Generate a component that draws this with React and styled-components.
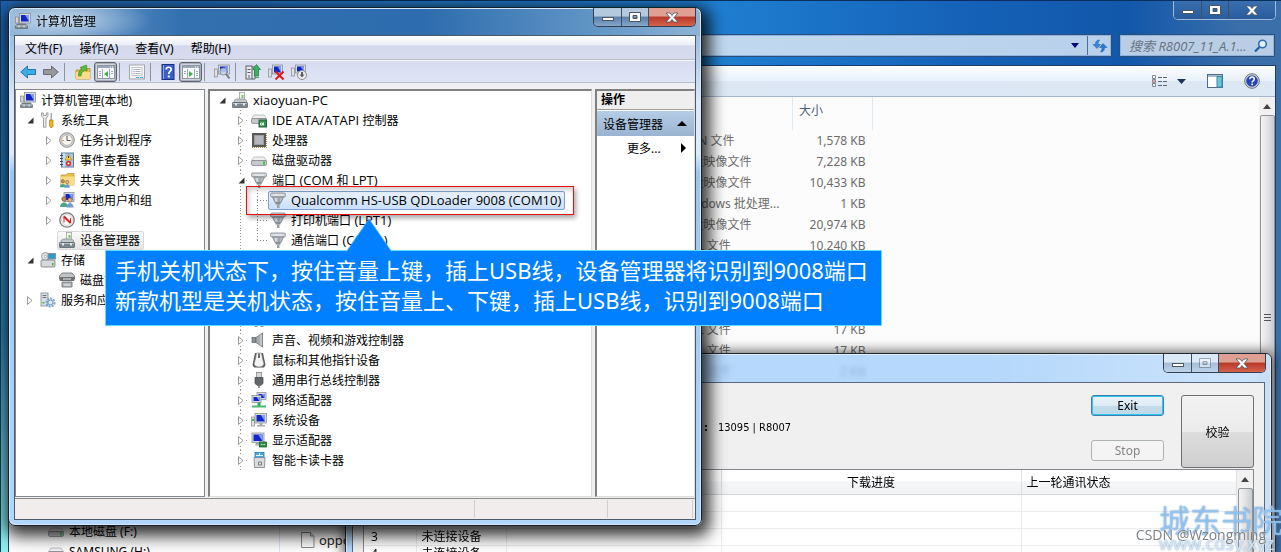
import React from "react";
import styled, { createGlobalStyle, css } from "styled-components";

const Global = createGlobalStyle`
  * { box-sizing: border-box; }
  html, body { margin: 0; height: 100%; }
  body {
    font-family: "Noto Sans", "Noto Sans CJK SC", sans-serif;
    font-size: 12px;
    color: #000;
    overflow: hidden;
  }
  button, input { font: inherit; color: inherit; margin: 0; padding: 0; border: 0; background: none; }
  button { cursor: default; }
  svg { display: block; flex: none; }
  ul, h1, h2 { margin: 0; padding: 0; list-style: none; font-size: 12px; font-weight: 400; }
`;

/* ---------- icons ---------- */

const Screen = ({ x = 5, y = 1, w = 10, h = 9 }) => (
  <>
    <rect x={x} y={y} width={w} height={h} fill="#d8dce0" stroke="#8b9299" strokeWidth=".8" />
    <rect x={x + 1.5} y={y + 1.5} width={w - 3} height={h - 3} fill="#1226c8" />
    <path d={`M${x + w / 2} ${y + 1.5}h${w / 2 - 1.5}v${h - 3}z`} fill="#7f9cf0" />
  </>
);

const Drive = ({ y = 6 }) => (
  <>
    <path d={`M3 ${y}h10l2.500 3.500H.5z`} fill="#f0f0f1" stroke="#aaa" strokeWidth=".7" />
    <rect x=".5" y={y + 3.5} width="15" height="5" rx="1.5" fill="#c6c8ce" stroke="#85878f" strokeWidth=".8" />
  </>
);

const Port = () => (
  <>
    <rect x=".5" y="1" width="15" height="4" rx="1.500" fill="#cfd4d8" stroke="#7f868c" strokeWidth=".8" />
    <path d="M2.500 5h11L11 10.500H5z" fill="#b4bbc0" stroke="#777e84" strokeWidth=".8" />
    <path d="M3 3h10M6 6v3.500" stroke="#f5f5f5" />
    <path d="M9 6v4" stroke="#8b9297" />
    <path d="M5.500 10.500h5v2h-5z" fill="#858c92" />
    <path d="M7 12.500h2.500v3.500H7z" fill="#9aa1a7" />
  </>
);

const Toolcase = () => (
  <>
    <rect x="7.500" y="0.500" width="5" height="8" fill="#f3f3ee" stroke="#999" strokeWidth=".7" />
    <rect x="9.500" y="3" width="2" height="3" fill="#7cc46a" />
    <path d="M2 8.500L4.500 7h8L14.500 8.500v2h-12z" fill="#c2c7cb" stroke="#7d848a" strokeWidth=".7" />
    <rect x=".5" y="10.500" width="15" height="5" rx=".6" fill="#7b858e" stroke="#545c63" strokeWidth=".7" />
    <path d="M1 11.500h14" stroke="#b6bdc3" />
    <rect x="3" y="11" width="2" height="2.500" fill="#e4e7ea" />
    <rect x="11" y="11" width="2" height="2.500" fill="#e4e7ea" />
  </>
);

const Console = () => (
  <>
    <rect x=".5" y="4" width="3" height="6" fill="#d0d3d6" stroke="#888" strokeWidth=".7" />
    <Screen x={4.5} y={0.5} w={11} h={9.5} />
    <path d="M2.500 11h8l2 2v2.500H.5V13z" fill="#7b858e" stroke="#545c63" strokeWidth=".6" />
    <path d="M1 13h11" stroke="#c4cad0" />
    <path d="M4 12.500v2M9 12.500v2" stroke="#eceeef" />
  </>
);

const Pane = ({ flip }) => (
  <>
    <rect x=".5" y="1.500" width="17" height="13" fill="#f7f8fa" stroke="#8c97a6" />
    <path d="M1 3h16" stroke="#9ba7b8" strokeWidth="2" />
    <path d="M13 3h1M15 3h1" stroke="#fff" />
    {flip ? (
      <>
        <path d="M12.500 5v9M5.500 5v9" stroke="#9ba7b8" />
        <path d="M14 7.500h2M14 9.500h2M14 11.500h2M2 7.500h2M2 9.500h2" stroke="#9ba7b8" />
        <path d="M7 7v6l4-3z" fill="#3cb53c" />
      </>
    ) : (
      <>
        <path d="M5.500 5v9M12.500 5v9" stroke="#9ba7b8" />
        <path d="M2 7.500h2M2 9.500h2M2 11.500h2M14 7.500h2M14 9.500h2" stroke="#9ba7b8" />
        <path d="M11 7v6l-4-3z" fill="#3cb53c" />
      </>
    )}
  </>
);

const People = () => (
  <>
    <circle cx="5" cy="7" r="2.300" fill="#c58a5a" stroke="#6e4a2e" strokeWidth=".6" />
    <path d="M1 15c0-6 8-6 8 0z" fill="#4aa687" />
    <circle cx="11" cy="8" r="2.200" fill="#e0b58a" stroke="#6e4a2e" strokeWidth=".6" />
    <path d="M7.500 15.500c0-6 7-6 7 0z" fill="#6f9ccf" />
  </>
);

const ART = {
  console: <Console />,
  toolcase: <Toolcase />,
  tools: (
    <>
      <path d="M1.500 .8v3.500L3.500 6v9.200h2.500V6l2-1.700V.8L6.300 1v2.500h-3V1z" fill="#ededed" stroke="#8a8a8a" strokeWidth=".8" />
      <path d="M10.500 1h1.500v7h-1.500z" fill="#aaa" />
      <path d="M9.500 8H13v6l-1 1.500h-1.500l-1-1.500z" fill="#f2b21c" stroke="#b57d08" strokeWidth=".7" />
    </>
  ),
  clock: (
    <>
      <circle cx="8" cy="8" r="7.300" fill="#d2d4d6" stroke="#8a8c8f" />
      <circle cx="8" cy="8" r="5.300" fill="#fbf8ea" stroke="#a3a5a6" strokeWidth=".7" />
      <path d="M8 3.500V8.500h3.500" fill="none" stroke="#44526a" />
      <path d="M3.500 8.500h1.500" stroke="#d59b33" />
    </>
  ),
  event: (
    <>
      <rect x="2.500" y="1" width="12" height="14" fill="#a9c9ec" stroke="#5d7ba0" />
      <path d="M5 1v14" stroke="#e8f1fa" />
      <path d="M1 3.500h3M1 6.500h3M1 9.500h3M1 12.500h3" stroke="#3d4a58" />
      <path d="M9.500 2l3.500 6H6z" fill="#f7d02e" stroke="#a98408" strokeWidth=".6" />
      <path d="M9.500 4v2" stroke="#333" />
      <circle cx="9.500" cy="11.500" r="2.700" fill="#d8322a" />
      <circle cx="9.500" cy="11.500" r="1" fill="#fff" />
    </>
  ),
  share: (
    <>
      <path d="M2 3h5l1.500-1.500h6.500V13H2z" fill="#e9bf4f" stroke="#b98d26" strokeWidth=".7" />
      <path d="M2 4.500h13V13H2z" fill="#f7dd85" />
      <g transform="translate(0 4) scale(.75)"><People /></g>
    </>
  ),
  users: (
    <>
      <Screen x={5} y={0.5} w={10} h={9} />
      <People />
    </>
  ),
  perf: (
    <>
      <circle cx="8" cy="8" r="7.200" fill="#f5f5f5" stroke="#77797c" strokeWidth="1.300" />
      <circle cx="8" cy="8" r="5.300" fill="#fff" stroke="#bbb" strokeWidth=".6" />
      <path d="M5 4.500v6M11.500 6v5" stroke="#d42020" />
      <path d="M5 4.500l6.500 6.500" stroke="#d42020" strokeWidth="2" />
    </>
  ),
  storage: (
    <>
      <circle cx="5.500" cy="4.500" r="4" fill="#e2e4e6" stroke="#85898e" strokeWidth=".8" />
      <circle cx="5.500" cy="4.500" r="1.200" fill="#fff" stroke="#85898e" strokeWidth=".6" />
      <rect x="8" y="1.500" width="7.500" height="5.500" fill="#2f9ad0" stroke="#87949e" />
      <rect x="1" y="8" width="14" height="7" rx="1" fill="#d6d8da" stroke="#75797e" strokeWidth=".8" />
      <rect x="12" y="11" width="1.500" height="2.500" fill="#33b933" />
    </>
  ),
  disk: (
    <>
      <path d="M3 1h10l2.500 3v3H.5V4z" fill="#c2c4c6" stroke="#66696c" strokeWidth=".8" />
      <rect x=".5" y="5" width="15" height="4" rx="1" fill="#6f7275" />
      <path d="M3 10h10v5H3z" fill="#b5b7b9" stroke="#66696c" strokeWidth=".8" />
      <path d="M4 7h8M5 13h6" stroke="#ececec" />
    </>
  ),
  services: (
    <>
      <rect x="1" y="1" width="7" height="13" fill="#d9e0e5" stroke="#7e8a93" strokeWidth=".8" />
      <path d="M2.500 3.500h4M2.500 5.500h4" stroke="#6a7780" />
      <rect x="2.500" y="10" width="2" height="1.500" fill="#46ad46" />
      <circle cx="10.500" cy="10.500" r="4" fill="none" stroke="#7ba3c7" strokeWidth="2" strokeDasharray="2 1" />
      <circle cx="10.500" cy="10.500" r="2.500" fill="#dbe8f4" stroke="#6f95b8" />
    </>
  ),
  ide: (
    <>
      <Drive y={3} />
      <rect x="8" y="8" width="7.500" height="7" fill="#3b8f50" stroke="#1f6634" />
      <path d="M9.500 11h2v2h-2zM12.500 10.500v3" stroke="#d9f2dd" fill="none" />
    </>
  ),
  cpu: (
    <>
      <rect x="1" y="1" width="14" height="14" fill="#5a5a58" />
      <path d="M1 15.500h15M15.500 1v15" stroke="#b08e3c" strokeDasharray="1 1" />
      <rect x="3.500" y="3.500" width="9" height="9" fill="#b5b8ba" stroke="#9b9ea0" />
    </>
  ),
  drive: (
    <>
      <Drive y={5} />
      <rect x="12" y="9.500" width="2" height="3" fill="#3bc63b" />
    </>
  ),
  port: <Port />,
  blob: (
    <>
      <circle cx="5" cy="13" r="2" fill="#777" />
      <circle cx="11" cy="13" r="2" fill="#777" />
    </>
  ),
  sound: (
    <>
      <rect x="1" y="5.500" width="4" height="5" fill="#8b9095" stroke="#5f6468" strokeWidth=".7" />
      <path d="M5 5.500L11.500 1v14L5 10.500z" fill="#a9aeb2" stroke="#6b7074" strokeWidth=".8" />
      <path d="M10 2.500v11" stroke="#dfe2e4" />
    </>
  ),
  mouse: (
    <>
      <path d="M4 1h8l2.500 12-1.500 2.500H3L1.500 13z" fill="#5a5a5a" />
      <path d="M5.500 1h5l1 5.500 1.500 5.500c-1 4-9 4-10 0l1.500-5.500z" fill="#f3f3f3" stroke="#777" strokeWidth=".6" />
      <path d="M8 1.500v4.500" stroke="#444" strokeWidth="1.500" />
    </>
  ),
  usb: (
    <>
      <rect x="5.500" y="0.500" width="5" height="5" fill="#d6d8da" stroke="#85898e" strokeWidth=".8" />
      <path d="M4 5.500h8v6l-2.500 2h-3L4 11.500z" fill="#64686c" stroke="#45484b" strokeWidth=".7" />
      <path d="M8 13v3" stroke="#777" strokeWidth="1.500" />
    </>
  ),
  net: (
    <>
      <Screen x={6} y={0.5} w={9} h={7} />
      <Screen x={1} y={3.5} w={9} h={7} />
      <path d="M8 10.500v4" stroke="#2fa35a" strokeWidth="3" />
      <path d="M1 14.500h14" stroke="#48b872" strokeWidth="2" />
    </>
  ),
  system: (
    <>
      <rect x=".5" y="5" width="3" height="9" fill="#dfe2e4" stroke="#85898e" strokeWidth=".7" />
      <rect x="1" y="7" width="2" height="2" fill="#39b539" />
      <Screen x={4} y={1.5} w={11.5} h={9.5} />
      <path d="M8.500 11h3v2h2.500v1.500H6V13h2.500z" fill="#a7acb0" />
    </>
  ),
  display: (
    <>
      <Screen x={1} y={1} w={12} h={9.5} />
      <path d="M5 11h4v2.500H4z" fill="#a7acb0" />
      <rect x="8.500" y="10" width="7" height="5" fill="#2f8a46" stroke="#1f6634" strokeWidth=".8" />
      <path d="M10 12.500h1.500M12.500 12.500h1.500" stroke="#d9f2dd" />
    </>
  ),
  card: (
    <>
      <rect x="4" y=".5" width="9" height="6" fill="#44a8e8" stroke="#2b79b5" strokeWidth=".8" />
      <path d="M5 3.500h7M8.500 1v3" stroke="#e9f6ff" />
      <path d="M3 5.500h11l-.5 10h-10z" fill="#d9dbdd" stroke="#7b8085" strokeWidth=".8" />
      <path d="M7.500 10h3v3h-3z" fill="none" stroke="#7b8085" />
    </>
  ),
  back: <path d="M.8 8l6.700-6v3.500h8v5h-8V14z" fill="#3fabe6" stroke="#2474b0" />,
  forward: <path d="M15.200 8L8.500 2v3.500H.5v5h8V14z" fill="#98999b" stroke="#6c6e70" />,
  up: (
    <>
      <path d="M1 6h5l1-1.500h8V15H1z" fill="#e8bd57" stroke="#b38a2b" strokeWidth=".8" />
      <path d="M1 8h14v7H1z" fill="#f8dc8c" />
      <path d="M3.500 12c0-5 1-5.500 3.500-7L5 3.500 11.500 1l.5 6-2-1C8 7.500 6.500 8 6 12z" fill="#5dbb36" stroke="#377f1b" strokeWidth=".6" />
    </>
  ),
  props: (
    <>
      <rect x=".5" y="1" width="15" height="14" fill="#f6f6f4" stroke="#a2a6aa" />
      <rect x="3" y="3.500" width="10" height="8" fill="#fff" stroke="#b6babf" strokeWidth=".8" />
      <path d="M4.500 5.500h1M4.500 7.500h1M4.500 9.500h1" stroke="#4d88c8" />
      <path d="M6.500 5.500h5M6.500 7.500h5M6.500 9.500h5" stroke="#aeb3b8" />
      <path d="M7 13.500h3M11 13.500h3" stroke="#38b8d8" />
    </>
  ),
  help: (
    <>
      <rect x="2" y=".5" width="12" height="15" fill="#3a5ec8" stroke="#1a3184" />
      <path d="M3.500 1v14" stroke="#8faaf0" />
      <path d="M6.200 5.500c0-3 5-3 5 0 0 2-2.500 2-2.500 4.500" fill="none" stroke="#fff" strokeWidth="1.700" />
      <rect x="7.800" y="11.500" width="2" height="2" fill="#fff" />
    </>
  ),
  scan: (
    <>
      <rect x=".5" y="5" width="3" height="8" fill="#dfe2e4" stroke="#85898e" strokeWidth=".7" />
      <Screen x={4.5} y={1} w={11} h={9} />
      <circle cx="9.500" cy="7.500" r="3.500" fill="#cfe6f8" fillOpacity=".8" stroke="#8d9094" />
      <path d="M12 10l3.500 4.500" stroke="#76797c" strokeWidth="2" />
    </>
  ),
  update: (
    <>
      <rect x="1" y="2" width="6" height="13" fill="#e7e9ea" stroke="#5c6064" />
      <path d="M2.500 5.500h3M2.500 8.500h3M4 11v3M7 3h3v12H7" stroke="#5c6064" fill="none" />
      <path d="M11.500 .5l4 5h-2V12h-4V5.500h-2z" fill="#3dae62" stroke="#1e7a3d" strokeWidth=".7" />
      <path d="M10 13.500h4" stroke="#3dae62" />
    </>
  ),
  remove: (
    <>
      <rect x=".5" y="5" width="3" height="8" fill="#dfe2e4" stroke="#85898e" strokeWidth=".7" />
      <Screen x={4.5} y={1} w={10} h={9} />
      <path d="M7.500 7.500l8 8M15.500 7.500l-8 8" stroke="#e01b1b" strokeWidth="2" />
    </>
  ),
  disable: (
    <>
      <rect x=".5" y="4" width="3" height="8" fill="#dfe2e4" stroke="#85898e" strokeWidth=".7" />
      <Screen x={4.5} y={1} w={10} h={8} />
      <circle cx="11" cy="11" r="4.500" fill="#ededee" stroke="#8a8c8f" />
      <path d="M11 8v3" stroke="#5e6164" strokeWidth="2" />
      <path d="M8.500 10.500h5L11 13.500z" fill="#5e6164" />
    </>
  ),
  file: (
    <>
      <path d="M1.500 .5h9L14 4v11.500H1.500z" fill="#fbfbfb" stroke="#8b8b8b" />
      <path d="M10.500 .5V4H14" fill="#e4e4e4" stroke="#8b8b8b" />
    </>
  ),
};

const Icon = ({ name, wide }) => (
  <svg width={wide ? 18 : 16} height="16" viewBox={wide ? "0 0 18 16" : "0 0 16 16"} aria-hidden="true">
    {name === "paneLeft" ? <Pane /> : name === "paneRight" ? <Pane flip /> : ART[name]}
  </svg>
);

/* ---------- window chrome ---------- */

const Desktop = styled.main`
  position: relative;
  height: 100vh;
  min-height: 552px;
  overflow: hidden;
  background: #0c4a96;
`;

const CaptionGroup = styled.div`
  display: flex;
  height: 19px;
  border: 1px solid ${(p) => (p.$tone === "back" ? "#9db9dc" : "#33404f")};
  border-top: 0;
  border-radius: 0 0 5px 5px;
  overflow: hidden;
`;

const toneFill = {
  back: "linear-gradient(#3a6fae, #285c9d)",
  front: "linear-gradient(#b4c8de 0 45%, #5b7fa6 50%, #84a8cb)",
  pale: "linear-gradient(#dce9f7 0 45%, #a7bdd6 50%, #bdd3ea)",
};

const CaptionButton = styled.button`
  width: ${(p) => (p.$wide ? 47 : 27)}px;
  display: grid;
  place-items: center;
  background: ${(p) =>
    p.$wide && p.$tone !== "back" ? "linear-gradient(#dda093 0 45%, #b8372a 50%, #d4644a)" : toneFill[p.$tone]};
  & + & { border-left: 1px solid ${(p) => (p.$tone === "back" ? "#8fabd0" : "#3f4e60")}; }
`;

function Captions({ tone, mute }) {
  return (
    <CaptionGroup $tone={tone}>
      <CaptionButton $tone={tone} aria-label="最小化">
        <svg width="14" height="10"><rect x="1.500" y="5.500" width="11" height="3" fill="#fff" stroke="#4b5663" /></svg>
      </CaptionButton>
      <CaptionButton $tone={tone} aria-label="最大化">
        <svg width="14" height="10" opacity={mute ? 0.45 : 1}>
          <path d="M1.500 .5h11v9h-11zM5 3.500h4v3H5z" fill="#fff" fillRule="evenodd" stroke="#4b5663" />
        </svg>
      </CaptionButton>
      <CaptionButton $tone={tone} $wide aria-label="关闭">
        <svg width="14" height="11">
          <path d="M1 1h4l2 2.500L9 1h4L9 5.500l4 4.500H9L7 7.500 5 10H1l4-4.500z" fill="#fff" stroke="#4b5663" strokeWidth=".8" />
        </svg>
      </CaptionButton>
    </CaptionGroup>
  );
}

/* ---------- explorer window ---------- */

const ExplorerWindow = styled.section`
  height: 100%;
  display: flex;
  flex-direction: column;
  padding: 0 5px 0 7px;
  border-top: 1px solid #0b2f5c;
  border-left: 1px solid #1c3a5c;
  background:
    linear-gradient(#1c63b0, #2a86b4 60%, #8ff0ee) 0 0 / 7px 100% no-repeat,
    linear-gradient(90deg, #2467ad, #1f80d2 55%, #1562b8 75%, #1257aa 88%, #3b6fa9 97%);
`;

const ExplorerTitle = styled.header`
  display: flex;
  justify-content: flex-end;
  height: 33px;
`;

const AddressRow = styled.div`
  display: flex;
  gap: 7px;
  height: 23px;
  padding-right: 1px;
`;

const Glassy = styled.div`
  display: flex;
  align-items: center;
  border: 1px solid #2c4f7c;
  outline: 1px solid #8fb3dc;
  outline-offset: -2px;
  background: ${(p) => (p.$search ? "#b9cde5" : "linear-gradient(90deg, #c3dcf2 50%, #b9d0ea)")};
`;

const Address = styled(Glassy)`
  flex: 1;
  justify-content: flex-end;
`;

const AddressButton = styled.button`
  display: grid;
  place-items: center;
  width: 24px;
  height: 21px;
  & + & { border-left: 1px solid #4e6f98; }
`;

const Search = styled(Glassy).attrs({ as: "label" })`
  width: 156px;
  padding: 0 6px 0 9px;
`;

const SearchInput = styled.input`
  flex: 1;
  min-width: 0;
  font-family: "Open Sans", "Noto Sans CJK SC", sans-serif;
  font-size: 13px;
  font-style: italic;
  outline: 0;
  &::placeholder { color: #66727f; opacity: 1; }
`;

const ExplorerBody = styled.div`
  flex: 1;
  display: flex;
  flex-direction: column;
  min-height: 0;
  margin-top: 8px;
  border: 1px solid #1d3d66;
  border-bottom: 0;
  background: #fcfcfc;
`;

const CommandBar = styled.div`
  display: flex;
  justify-content: flex-end;
  align-items: center;
  gap: 21px;
  height: 31px;
  flex: none;
  padding-right: 15px;
  border-bottom: 1px solid #a5b7d0;
  background: linear-gradient(#fdfeff, #e8f0fa 50%, #dce6f4 52%, #dde8f5);
`;

const ViewGroup = styled.button`
  display: flex;
  align-items: center;
  gap: 10px;
`;

const PlainButton = styled.button`
  display: grid;
  place-items: center;
`;

const ExplorerSplit = styled.div`
  flex: 1;
  display: flex;
  min-height: 0;
  overflow: hidden;
`;

const NavPane = styled.ul`
  width: 271px;
  padding-top: 424px;
  border-right: 1px solid #d6e5f5;
`;

const NavItem = styled.li`
  display: flex;
  align-items: center;
  gap: 5px;
  height: 20px;
  padding-left: 39px;
`;

const FileArea = styled.div`
  flex: 1;
  min-width: 0;
`;

const FileTable = styled.table`
  width: 593px;
  table-layout: fixed;
  border-collapse: collapse;
  color: #6d6d6d;
  th {
    height: 33px;
    padding: 0 0 8px 6px;
    text-align: left;
    font-weight: 400;
    color: #4c607a;
    border-right: 1px solid #dfeaf7;
  }
  td {
    height: 21px;
    padding: 0;
    line-height: 16px;
    white-space: nowrap;
    overflow: hidden;
  }
  td:last-child { text-align: right; padding-right: 7px; }
`;

const FileName = styled.span`
  display: flex;
  align-items: center;
  gap: 3px;
  padding-left: 20px;
  font-size: 13px;
  color: #222;
`;

const Scrollbar = styled.div`
  width: 16px;
  flex: none;
  display: flex;
  flex-direction: column;
  align-items: center;
  background: #f1f1f1;
`;

const ScrollArrow = styled.button`
  display: grid;
  place-items: center;
  width: 16px;
  height: 18px;
  flex: none;
`;

const Thumb = styled.div`
  display: grid;
  place-items: center;
  width: 15px;
  height: ${(p) => p.$height}px;
  flex: none;
  border: 1px solid #8f9499;
  border-radius: 2px;
  background: linear-gradient(90deg, #f4f4f4, #e3e3e5 50%, #c9cacd);
`;

const ArrowUp = () => (
  <svg width="8" height="5"><path d="M0 5l4-5 4 5z" fill="#444" /></svg>
);

const files = [
  ["MBN 文件", "1,578 KB"],
  ["光盘映像文件", "7,228 KB"],
  ["光盘映像文件", "10,433 KB"],
  ["Windows 批处理...", "1 KB"],
  ["光盘映像文件", "20,974 KB"],
  ["XML 文件", "10,240 KB"],
  [], [], [],
  ["XML 文件", "17 KB"],
  ["XML 文件", "17 KB"],
  ["XML 文件", "2 KB"],
  [], [], [], [], [], [], [],
  [null, null, "oppo"],
];

function Explorer() {
  return (
    <ExplorerWindow>
      <ExplorerTitle><Captions tone="back" /></ExplorerTitle>
      <AddressRow>
        <Address>
          <AddressButton aria-label="展开地址">
            <svg width="8" height="5"><path d="M0 0h8L4 5z" fill="#000080" /></svg>
          </AddressButton>
          <AddressButton aria-label="刷新">
            <svg width="16" height="14" viewBox="0 0 16 14">
              <path d="M7.500 1C5 1 3.500 2 3.500 5.500H1l4 4 3.500-4H6c0-2 .5-3 1.500-4.500z" fill="#3787d8" stroke="#1e5da3" strokeWidth=".5" />
              <path d="M8.500 13c2.500 0 4-1 4-4.500H15l-4-4-3.500 4H10c0 2-.5 3-1.500 4.500z" fill="#2c78cc" stroke="#1e5da3" strokeWidth=".5" />
            </svg>
          </AddressButton>
        </Address>
        <Search $search>
          <SearchInput type="text" placeholder="搜索 R8007_11_A.1..." aria-label="搜索" />
          <svg width="14" height="14" viewBox="0 0 14 14">
            <circle cx="8.500" cy="5" r="3.800" fill="#e3effa" stroke="#2a6fbd" strokeWidth="1.600" />
            <path d="M5.500 8L1 12.500" stroke="#1d5ba5" strokeWidth="2.200" />
          </svg>
        </Search>
      </AddressRow>
      <ExplorerBody>
        <CommandBar>
          <ViewGroup aria-label="更改视图">
            <svg width="15" height="13" viewBox="0 0 15 13">
              <path d="M.5 .5h3v3h-3zM.5 4.500h3v3h-3zM.5 8.500h3v3h-3z" fill="#fff" stroke="#808894" />
              <path d="M6 2.500h4M11 2.500h4M6 6.500h4M11 6.500h4M6 10.500h4M11 10.500h4" stroke="#5d6670" />
              <circle cx="2" cy="6" r=".8" fill="#c33" />
            </svg>
            <svg width="9" height="5"><path d="M0 0h9L4.500 5z" fill="#1d3557" /></svg>
          </ViewGroup>
          <PlainButton aria-label="预览窗格">
            <svg width="16" height="14" viewBox="0 0 16 14">
              <rect x=".5" y=".5" width="15" height="13" fill="#fff" stroke="#4f6c8c" />
              <path d="M1 2h14" stroke="#a9bace" strokeWidth="2" />
              <rect x="10" y="2.500" width="5" height="10.500" fill="#6cc5dc" stroke="#3c8ba4" />
            </svg>
          </PlainButton>
          <PlainButton aria-label="帮助">
            <svg width="16" height="16" viewBox="0 0 16 16">
              <circle cx="8" cy="8" r="7.300" fill="#d5d8dc" stroke="#6b7178" />
              <circle cx="8" cy="8" r="5.800" fill="#2345b8" />
              <path d="M5.800 6.300c0-3 4.500-3 4.500 0 0 1.600-2.200 1.600-2.200 3.200" fill="none" stroke="#fff" strokeWidth="1.500" />
              <rect x="7.300" y="10.500" width="1.700" height="1.700" fill="#fff" />
            </svg>
          </PlainButton>
        </CommandBar>
        <ExplorerSplit>
          <NavPane>
            <NavItem><Icon name="drive" />本地磁盘 (F:)</NavItem>
            <NavItem><Icon name="drive" />SAMSUNG (H:)</NavItem>
          </NavPane>
          <FileArea>
            <FileTable>
              <colgroup><col /><col style={{ width: 113 }} /><col style={{ width: 80 }} /></colgroup>
              <thead><tr><th /><th /><th>大小</th></tr></thead>
              <tbody>
                {files.map(([type, size, name], i) => (
                  <tr key={i}>
                    <td>{name && <FileName><Icon name="file" />{name}</FileName>}</td>
                    <td>{type}</td>
                    <td>{size}</td>
                  </tr>
                ))}
              </tbody>
            </FileTable>
          </FileArea>
          <Scrollbar>
            <ScrollArrow aria-label="向上滚动"><ArrowUp /></ScrollArrow>
            <Thumb $height={406}>
              <svg width="7" height="8"><path d="M0 .5h7M0 3.500h7M0 6.500h7" stroke="#555" /></svg>
            </Thumb>
          </Scrollbar>
        </ExplorerSplit>
      </ExplorerBody>
    </ExplorerWindow>
  );
}

/* ---------- download tool window ---------- */

const ToolWindow = styled.section`
  position: absolute;
  left: 345px;
  right: 9px;
  top: 353px;
  bottom: -8px;
  display: flex;
  flex-direction: column;
  border: 1px solid #1f2a36;
  border-radius: 6px 6px 0 0;
  background: linear-gradient(90deg, rgba(160, 205, 250, .78) 70%, rgba(198, 223, 250, .85));
  backdrop-filter: blur(2px);
  box-shadow: 0 0 12px 2px rgba(0, 0, 0, .6), inset 0 0 0 1px #e4f1fd;
`;

const ToolTitle = styled.header`
  display: flex;
  justify-content: flex-end;
  height: 28px;
  flex: none;
  padding-right: 5px;
`;

const ToolBody = styled.div`
  flex: 1;
  display: flex;
  flex-direction: column;
  min-height: 0;
  margin: 0 6px;
  padding: 0 10px;
  border: 1px solid #59687c;
  background: #f0f0f0;
`;

const ToolControls = styled.div`
  display: flex;
  align-items: flex-start;
  gap: 17px;
  height: 86px;
  flex: none;
  padding-top: 12px;
`;

const ToolInfo = styled.p`
  flex: 1;
  display: flex;
  gap: 10px;
  margin: 23px 0 0;
  padding-left: 341px;
  line-height: 20px;
  font-family: "DejaVu Sans Condensed", "Noto Sans", sans-serif;
  font-size: 11px;
`;

const ToolButtons = styled.div`
  display: flex;
  flex-direction: column;
  gap: 24px;
  width: 73px;
`;

const ToolButton = styled.button`
  height: ${(p) => (p.$tall ? 73 : 21)}px;
  ${(p) => p.$tall && "width: 73px;"}
  border: 1px solid #707070;
  border-radius: 3px;
  background: linear-gradient(#f2f2f2, #ebebeb 50%, #dddddd 51%, #cfcfcf);
  ${(p) => p.$focus && css`
    border-color: #3c7fb1;
    box-shadow: inset 0 0 0 1px #2fc4f0;
    background: linear-gradient(#eaf4fa, #dceaf4 50%, #c3dbe9 51%, #bcd9ea);
  `}
  &:disabled { border-color: #adb2b5; background: #f4f4f4; color: #838383; }
`;

const ToolList = styled.div`
  flex: 1;
  display: flex;
  min-height: 0;
  border: 1px solid #828790;
  border-bottom: 0;
  background: #fff;
`;

const TaskTable = styled.table`
  flex: 1;
  align-self: flex-start;
  table-layout: fixed;
  width: 100%;
  border-collapse: collapse;
  th {
    height: 24px;
    padding: 0 5px;
    font-weight: 400;
    text-align: left;
    border-right: 1px solid #dcdfe3;
    border-bottom: 1px solid #d5d5d5;
    background: linear-gradient(#fff 45%, #f5f6f8 50%, #f1f2f4);
  }
  th:nth-child(4) { text-align: center; }
  td {
    height: 17px;
    padding: 0 5px;
    line-height: 14px;
    border-right: 1px solid #ececec;
    border-bottom: 1px solid #ececec;
    white-space: nowrap;
  }
  td:first-child { padding-left: 7px; }
`;

function DownloadTool() {
  return (
    <ToolWindow>
      <ToolTitle><Captions tone="pale" mute /></ToolTitle>
      <ToolBody>
        <ToolControls>
          <ToolInfo><b>:</b><span>13095 | R8007</span></ToolInfo>
          <ToolButtons>
            <ToolButton $focus>Exit</ToolButton>
            <ToolButton disabled>Stop</ToolButton>
          </ToolButtons>
          <ToolButton $tall>校验</ToolButton>
        </ToolControls>
        <ToolList>
          <TaskTable>
            <colgroup>
              <col style={{ width: 52 }} /><col style={{ width: 90 }} /><col style={{ width: 215 }} />
              <col style={{ width: 300 }} /><col />
            </colgroup>
            <thead>
              <tr><th /><th /><th /><th>下载进度</th><th>上一轮通讯状态</th></tr>
            </thead>
            <tbody>
              {[1, 2, 3, 4].map((n) => (
                <tr key={n}><td>{n}</td><td>未连接设备</td><td /><td /><td /></tr>
              ))}
            </tbody>
          </TaskTable>
          <Scrollbar>
            <ScrollArrow aria-label="向上滚动"><ArrowUp /></ScrollArrow>
            <Thumb $height={120} />
          </Scrollbar>
        </ToolList>
      </ToolBody>
    </ToolWindow>
  );
}

/* ---------- computer management window ---------- */

const ManageWindow = styled.section`
  position: absolute;
  left: 8px;
  top: 7px;
  width: 694px;
  height: 519px;
  display: flex;
  flex-direction: column;
  padding-bottom: 5px;
  border: 1px solid #16202c;
  border-radius: 7px;
  background:
    radial-gradient(ellipse 90px 26px at 52px 12px, rgba(215, 228, 241, .85), rgba(215, 228, 241, 0)) no-repeat,
    linear-gradient(90deg, #7ea8d2, #3370b0 25%, #2d6cae 60%, #6296c6 85%, #8fb3d6) 0 0 / 100% 28px no-repeat,
    linear-gradient(#7fabd8, #dbe9f8 18%, #dfebf8 28%, #9cc5f0 32%, #b3d6fb);
  box-shadow: 3px 5px 16px 5px rgba(0, 0, 0, .8), inset 0 0 0 1px #d5e6f7;
`;

const ManageTitle = styled.header`
  display: flex;
  align-items: flex-start;
  justify-content: space-between;
  height: 27px;
  flex: none;
  padding: 0 5px 0 6px;
`;

const TitleText = styled.h1`
  display: flex;
  align-items: center;
  gap: 5px;
  height: 25px;
`;

const ManageBody = styled.div`
  flex: 1;
  display: flex;
  flex-direction: column;
  min-height: 0;
  margin: 0 5px;
  border: 1px solid #4c5a6c;
  background: #f0f0f0;
`;

const MenuBar = styled.nav`
  display: flex;
  gap: 1px;
  height: 24px;
  flex: none;
  padding-left: 2px;
  border-bottom: 1px solid #b6bccc;
  background: linear-gradient(#fff, #e9edf6 40%, #d4daec 42%, #d6dcee);
`;

const MenuItem = styled.button`
  padding: 0 8px;
`;

const Toolbar = styled.div`
  display: flex;
  align-items: center;
  height: 23px;
  flex: none;
  padding-left: 1px;
  border-top: 1px solid #f7f8fc;
  border-bottom: 1px solid #b6bccc;
  background: linear-gradient(#d6dcef, #e0e5f5);
`;

const ToolbarButton = styled.button`
  display: grid;
  place-items: center;
  width: 23px;
  height: 20px;
  ${(p) => p.$pressed && "border: 1px solid #5f646c; border-radius: 3px; background: #d2d6de; box-shadow: inset 0 0 0 1px #a9aeb8;"}
`;

const Separator = styled.span`
  width: 1px;
  height: 18px;
  margin: 0 ${(p) => (p.$roomy ? 6 : 5)}px 0 2px;
  background: #8d929e;
`;

const Panels = styled.div`
  flex: 1;
  display: flex;
  gap: 3px;
  min-height: 0;
  padding-top: 6px;
`;

const Panel = styled.div`
  ${(p) => (p.$width ? `width: ${p.$width}px;` : "flex: 1;")}
  min-width: 0;
  border: 1px solid #828790;
  ${(p) => p.$sunken && "border-width: 2px 1px 1px 2px; border-color: #808080 #dcdcdc #dcdcdc #808080;"}
  background: #fff;
  overflow: hidden;
`;

const Tree = styled.ul`
  margin-top: ${(p) => (p.$raised ? -1 : 0)}px;
`;

const TreeRow = styled.li`
  display: flex;
  align-items: center;
  height: 20px;
  padding-left: ${(p) => p.$indent}px;
  white-space: nowrap;
`;

const Twist = styled.span`
  width: 11px;
  height: 20px;
  flex: none;
  display: grid;
  place-items: center start;
  ${(p) => p.$trunk && css`
    background:
      repeating-linear-gradient(#999 0 1px, transparent 1px 3px) 2px 0 / 1px 5px no-repeat,
      repeating-linear-gradient(#999 0 1px, transparent 1px 3px) 2px 16px / 1px 4px no-repeat,
      repeating-linear-gradient(90deg, #999 0 1px, transparent 1px 3px) 8px 10px / 4px 1px no-repeat;
  `}
  ${(p) => p.$branch && css`
    background:
      repeating-linear-gradient(#888 0 1px, transparent 1px 3px) 0 0 / 1px ${p.$branch === "last" ? 11 : 20}px no-repeat,
      repeating-linear-gradient(90deg, #888 0 1px, transparent 1px 3px) 0 10px / 10px 1px no-repeat;
  `}
`;

const Trunk = styled.span`
  width: 19px;
  height: 20px;
  flex: none;
  background: repeating-linear-gradient(#999 0 1px, transparent 1px 3px) 2px 0 / 1px 20px no-repeat;
`;

const TreeLabel = styled.span`
  display: flex;
  align-items: center;
  gap: 5px;
  height: 19px;
  padding: 0 3px 0 1px;
  border: 1px solid transparent;
  border-radius: 2px;
  ${(p) => p.$picked === "grey" && "border-color: #d9d9d9; background: linear-gradient(#fafafa, #e5e5e5);"}
  ${(p) => p.$picked === "blue" && "border-color: #7da2ce; background: linear-gradient(#eaf3fd, #c9dffa);"}
`;

const LabelText = styled.span`
  line-height: 17px;
`;

const Latin = styled.span`
  font-family: "Open Sans", sans-serif;
  font-size: 13px;
`;

/* Latin words run one size larger than the Chinese text beside them. */
function Label({ text }) {
  return (
    <LabelText>
      {text.split(/([\x20-\x7e]*[A-Za-z][\x20-\x7e]*)/).map((part, i) =>
        i % 2 ? <Latin key={i}>{part}</Latin> : part
      )}
    </LabelText>
  );
}

function TreeItem({ indent, state, trunk, branch, icon, label, picked }) {
  return (
    <TreeRow $indent={indent}>
      {branch && <Trunk />}
      <Twist $trunk={trunk} $branch={branch}>
        {state === "open" && <svg width="7" height="7"><path d="M6.500 .5v6h-6z" fill="#333" /></svg>}
        {state === "closed" && (
          <svg width="6" height="9"><path d="M.5 .5v8l4.500-4z" fill="#fff" stroke="#9a9a9a" /></svg>
        )}
      </Twist>
      <TreeLabel $picked={picked}><Icon name={icon} /><Label text={label} /></TreeLabel>
    </TreeRow>
  );
}

const navTree = [
  { icon: "console", label: "计算机管理(本地)", root: true },
  { indent: 11, state: "open", icon: "tools", label: "系统工具" },
  { indent: 30, state: "closed", icon: "clock", label: "任务计划程序" },
  { indent: 30, state: "closed", icon: "event", label: "事件查看器" },
  { indent: 30, state: "closed", icon: "share", label: "共享文件夹" },
  { indent: 30, state: "closed", icon: "users", label: "本地用户和组" },
  { indent: 30, state: "closed", icon: "perf", label: "性能" },
  { indent: 30, icon: "toolcase", label: "设备管理器", picked: "grey" },
  { indent: 11, state: "open", icon: "storage", label: "存储" },
  { indent: 30, icon: "disk", label: "磁盘管理" },
  { indent: 11, state: "closed", icon: "services", label: "服务和应用程序" },
];

const group = (icon, label, state = "closed") => ({ indent: 28, state, trunk: true, icon, label });

const deviceTree = [
  { indent: 9, state: "open", icon: "toolcase", label: "xiaoyuan-PC" },
  group("ide", "IDE ATA/ATAPI 控制器"),
  group("cpu", "处理器"),
  group("drive", "磁盘驱动器"),
  group("port", "端口 (COM 和 LPT)", "open"),
  { indent: 28, branch: "mid", icon: "port", label: "Qualcomm HS-USB QDLoader 9008 (COM10)", picked: "blue" },
  { indent: 28, branch: "mid", icon: "port", label: "打印机端口 (LPT1)" },
  { indent: 28, branch: "last", icon: "port", label: "通信端口 (COM1)" },
  group("blob", ""),
  group("blob", ""),
  group("blob", ""),
  group("blob", ""),
  group("sound", "声音、视频和游戏控制器"),
  group("mouse", "鼠标和其他指针设备"),
  group("usb", "通用串行总线控制器"),
  group("net", "网络适配器"),
  group("system", "系统设备"),
  group("display", "显示适配器"),
  group("card", "智能卡读卡器"),
];

const RootRow = styled.li`
  display: flex;
  align-items: center;
  height: 20px;
  padding-left: 2px;
`;

const ActionTitle = styled.h2`
  height: 19px;
  padding-left: 4px;
  line-height: 18px;
  font-weight: 700;
  border-bottom: 1px solid #a0a0a0;
  background: #efefef;
`;

const ActionGroup = styled.button`
  display: flex;
  align-items: center;
  justify-content: space-between;
  width: 100%;
  height: 25px;
  margin-top: 1px;
  padding: 0 7px 0 6px;
  background: linear-gradient(#b5cde6, #9ab3d0);
`;

const ActionMore = styled.button`
  display: flex;
  align-items: center;
  justify-content: space-between;
  width: 100%;
  height: 24px;
  padding: 0 8px 0 30px;
`;

const StatusBar = styled.footer`
  display: flex;
  justify-content: flex-end;
  height: 21px;
  flex: none;
  margin-top: 1px;
  padding: 1px 2px 1px 0;
  border-top: 1px solid #8b8b8b;
  background: #f1edec;
`;

const StatusCell = styled.span`
  width: ${(p) => p.$width}px;
  border-left: 1px solid #d0cdcc;
  &:last-child { border-right: 1px solid #d0cdcc; }
`;

function Management() {
  return (
    <ManageWindow>
      <ManageTitle>
        <TitleText><Icon name="console" />计算机管理</TitleText>
        <Captions tone="front" />
      </ManageTitle>
      <ManageBody>
        <MenuBar>
          <MenuItem>文件(F)</MenuItem>
          <MenuItem>操作(A)</MenuItem>
          <MenuItem>查看(V)</MenuItem>
          <MenuItem>帮助(H)</MenuItem>
        </MenuBar>
        <Toolbar>
          <ToolbarButton aria-label="后退"><Icon name="back" /></ToolbarButton>
          <ToolbarButton aria-label="前进"><Icon name="forward" /></ToolbarButton>
          <Separator $roomy />
          <ToolbarButton aria-label="上一级"><Icon name="up" /></ToolbarButton>
          <ToolbarButton aria-label="控制台树" $pressed><Icon name="paneLeft" wide /></ToolbarButton>
          <Separator />
          <ToolbarButton aria-label="属性"><Icon name="props" /></ToolbarButton>
          <Separator />
          <ToolbarButton aria-label="帮助"><Icon name="help" /></ToolbarButton>
          <ToolbarButton aria-label="操作窗格" $pressed><Icon name="paneRight" wide /></ToolbarButton>
          <Separator />
          <ToolbarButton aria-label="扫描硬件改动"><Icon name="scan" /></ToolbarButton>
          <Separator />
          <ToolbarButton aria-label="更新驱动程序"><Icon name="update" /></ToolbarButton>
          <ToolbarButton aria-label="卸载"><Icon name="remove" /></ToolbarButton>
          <ToolbarButton aria-label="禁用"><Icon name="disable" /></ToolbarButton>
        </Toolbar>
        <Panels>
          <Panel $width={190}>
            <Tree>
              {navTree.map((n) =>
                n.root ? (
                  <RootRow key={n.label}><TreeLabel><Icon name={n.icon} />{n.label}</TreeLabel></RootRow>
                ) : (
                  <TreeItem key={n.label} {...n} />
                )
              )}
            </Tree>
          </Panel>
          <Panel $sunken>
            <Tree $raised>
              {deviceTree.map((n, i) => <TreeItem key={i} {...n} />)}
            </Tree>
          </Panel>
          <Panel $sunken $width={100}>
            <ActionTitle>操作</ActionTitle>
            <ActionGroup>
              设备管理器
              <svg width="10" height="5"><path d="M0 5l5-5 5 5z" /></svg>
            </ActionGroup>
            <ActionMore>
              更多...
              <svg width="5" height="10"><path d="M0 0l5 5-5 5z" /></svg>
            </ActionMore>
          </Panel>
        </Panels>
        <StatusBar>
          <StatusCell $width={133} />
          <StatusCell $width={86} />
        </StatusBar>
      </ManageBody>
    </ManageWindow>
  );
}

/* ---------- annotations ---------- */

const RedFrame = styled.div`
  position: absolute;
  left: 246px;
  top: 186px;
  width: 328px;
  height: 29px;
  border: 1px solid #e81010;
  box-shadow: 2px 3px 5px rgba(0, 0, 0, .35), inset 2px 3px 5px rgba(0, 0, 0, .2);
`;

const Callout = styled.div`
  position: absolute;
  left: 105px;
  top: 250px;
  padding: 4px 13px 10px 9px;
  border: 1px solid #5fdcff;
  background: #0080ff;
  color: #fff;
  font-size: 22px;
  line-height: 30px;
  white-space: nowrap;
`;

const CalloutLine = styled.p`
  height: 30px;
  margin: 0;
`;

const Pointer = styled.svg`
  position: absolute;
  left: 240px;
  top: -33px;
`;

const Watermark = styled.div`
  position: absolute;
  right: -2px;
  bottom: 0;
  width: 124px;
  white-space: nowrap;
  line-height: 30px;
  font-size: 31px;
  color: rgba(150, 200, 245, .75);
  text-shadow: 0 0 2px #6f9cc4;
`;

const WatermarkSite = styled.div`
  height: 17px;
  line-height: 16px;
  font-size: 18px;
  color: rgba(225, 235, 245, .85);
`;

const Credit = styled.div`
  position: absolute;
  right: 15px;
  bottom: 7px;
  font-family: "Open Sans", sans-serif;
  font-size: 14px;
  line-height: 20px;
  color: rgba(110, 115, 122, .9);
  text-shadow: 0 0 1px #fff;
`;

export default function App() {
  return (
    <Desktop lang="zh-CN">
      <Global />
      <Explorer />
      <DownloadTool />
      <Management />
      <RedFrame />
      <Callout>
        <Pointer width="46" height="35" viewBox="0 0 46 35" aria-hidden="true">
          <path d="M0 34.500L23 1l23 33.500z" fill="#0080ff" />
          <path d="M0 34L23 1l23 33" fill="none" stroke="#3cb4ff" strokeWidth=".8" />
        </Pointer>
        <CalloutLine>手机关机状态下，按住音量上键，插上USB线，设备管理器将识别到9008端口</CalloutLine>
        <CalloutLine>新款机型是关机状态，按住音量上、下键，插上USB线，识别到9008端口</CalloutLine>
      </Callout>
      <Watermark>
        城东书院
        <WatermarkSite>www.cdsy.xyz</WatermarkSite>
      </Watermark>
      <Credit>CSDN @Wzongming</Credit>
    </Desktop>
  );
}
